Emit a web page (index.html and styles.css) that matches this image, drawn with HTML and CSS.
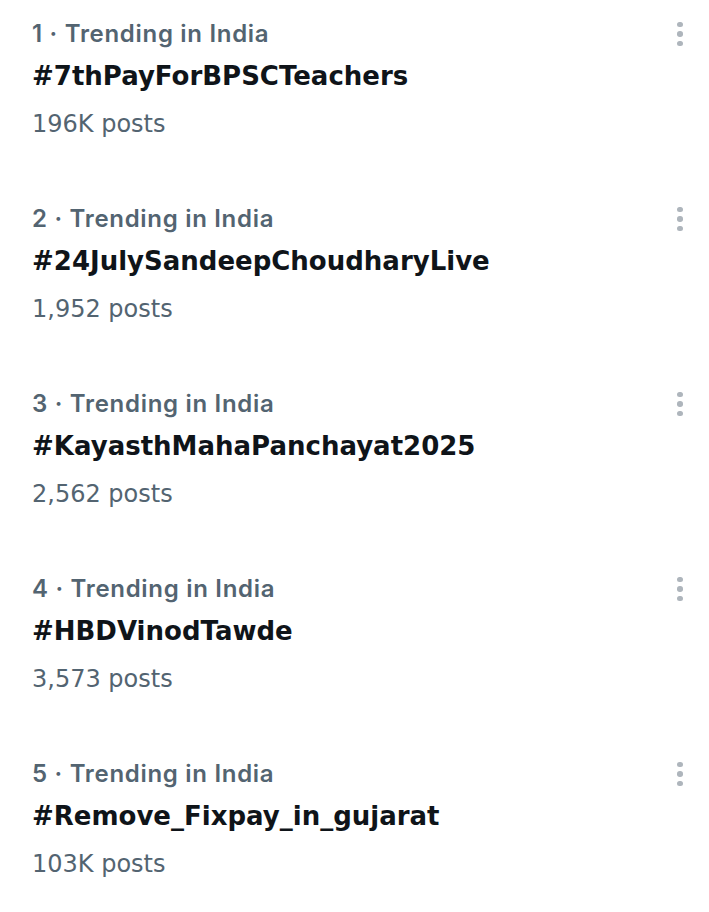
FILE: index.html
```html
<!DOCTYPE html>
<html lang="en">
<head>
<meta charset="utf-8">
<title>Trending</title>
<link rel="stylesheet" href="styles.css">
</head>
<body>
<div class="list">
  <div class="item">
    <div class="text">
      <div class="label">1 · Trending in India</div>
      <div class="title">#7thPayForBPSCTeachers</div>
      <div class="count">196K posts</div>
    </div>
    <div class="more"><span class="dot"></span><span class="dot"></span><span class="dot"></span></div>
  </div>
  <div class="item">
    <div class="text">
      <div class="label">2 · Trending in India</div>
      <div class="title">#24JulySandeepChoudharyLive</div>
      <div class="count">1,952 posts</div>
    </div>
    <div class="more"><span class="dot"></span><span class="dot"></span><span class="dot"></span></div>
  </div>
  <div class="item">
    <div class="text">
      <div class="label">3 · Trending in India</div>
      <div class="title">#KayasthMahaPanchayat2025</div>
      <div class="count">2,562 posts</div>
    </div>
    <div class="more"><span class="dot"></span><span class="dot"></span><span class="dot"></span></div>
  </div>
  <div class="item">
    <div class="text">
      <div class="label">4 · Trending in India</div>
      <div class="title">#HBDVinodTawde</div>
      <div class="count">3,573 posts</div>
    </div>
    <div class="more"><span class="dot"></span><span class="dot"></span><span class="dot"></span></div>
  </div>
  <div class="item">
    <div class="text">
      <div class="label">5 · Trending in India</div>
      <div class="title">#Remove_Fixpay_in_gujarat</div>
      <div class="count">103K posts</div>
    </div>
    <div class="more"><span class="dot"></span><span class="dot"></span><span class="dot"></span></div>
  </div>
</div>
</body>
</html>
```

FILE: styles.css
```css
html, body {
  margin: 0;
  padding: 0;
  background: #ffffff;
}
body {
  font-family: Inter, "DejaVu Sans", sans-serif;
  color: #0f1419;
}
.list {
  display: flex;
  flex-direction: column;
}
.item {
  display: flex;
  justify-content: space-between;
  align-items: flex-start;
  height: 185px;
  box-sizing: border-box;
  padding: 18px 22px 0 32px;
}
.text {
  display: flex;
  flex-direction: column;
}
.label {
  font-family: Inter, "DejaVu Sans", sans-serif;
  font-size: 24px;
  line-height: 32px;
  font-weight: 600;
  letter-spacing: 0.7px;
  color: #536471;
}
.title {
  margin-top: 8px;
  font-family: "DejaVu Sans", Inter, sans-serif;
  font-size: 26px;
  line-height: 36px;
  font-weight: 700;
  color: #0f1419;
}
.count {
  margin-top: 14px;
  font-family: "DejaVu Sans", Inter, sans-serif;
  font-size: 24px;
  line-height: 32px;
  font-weight: 400;
  color: #536471;
}
.more {
  display: flex;
  flex-direction: column;
  align-items: center;
  gap: 4px;
  width: 14px;
  height: 32px;
  justify-content: center;
}
.dot {
  width: 5.5px;
  height: 5.5px;
  border-radius: 50%;
  background: #aeb5bc;
}
```
